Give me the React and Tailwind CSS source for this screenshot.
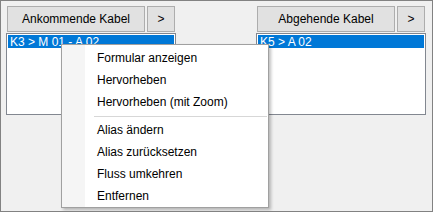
const cols = [
  { title: 'Ankommende Kabel', item: 'K3 > M 01 - A 02' },
  { title: 'Abgehende Kabel', item: 'K5 > A 02' },
];

const menu = [
  ['Formular anzeigen', 'Hervorheben', 'Hervorheben (mit Zoom)'],
  ['Alias ändern', 'Alias zurücksetzen', 'Fluss umkehren', 'Entfernen'],
];

function KabelColumn({ title, item }) {
  return (
    <div className="flex w-[170px] flex-col gap-px">
      <div className="ml-px flex gap-[2px]">
        <button className="h-[26px] w-[138px] border border-[#adadad] bg-[#e1e1e1] text-[12px] text-black">
          {title}
        </button>
        <button className="h-[26px] w-[28px] border border-[#adadad] bg-[#e1e1e1] text-[12px] text-black">
          &gt;
        </button>
      </div>
      <div className="h-[82px] border border-[#828790] bg-white p-px">
        <div className="flex h-[13px] items-center bg-[#0078d7] pl-[2px] text-[12px] leading-none text-white">
          {item}
        </div>
      </div>
    </div>
  );
}

export default function App() {
  return (
    <div
      className="relative h-[212px] w-[433px] overflow-hidden border border-[#828282] bg-[#f0f0f0]"
      style={{ fontFamily: '"Liberation Sans", Arial, sans-serif' }}
    >
      <div className="flex gap-[80px] pl-[5px] pt-[5px]">
        {cols.map((c) => (
          <KabelColumn key={c.title} {...c} />
        ))}
      </div>

      {/* context menu */}
      <div className="absolute left-[60px] top-[43px] flex h-[164px] w-[208px] border border-[#a0a0a0] bg-white pt-[2px] shadow-[2px_2px_3px_rgba(0,0,0,0.25)]">
        <div className="absolute bottom-0 left-0 top-0 w-[23px] bg-[#f5f5f5]" />
        <div className="relative flex w-full flex-col">
          {menu.map((group, gi) => (
            <div key={gi} className="flex flex-col">
              {gi > 0 && (
                <div className="flex h-[6px] items-center pl-[32px] pr-px">
                  <div className="h-px w-full bg-[#d7d7d7]" />
                </div>
              )}
              {group.map((label) => (
                <div key={label} className="flex h-[22px] items-center pl-[35px] text-[12px] text-black">
                  {label}
                </div>
              ))}
            </div>
          ))}
        </div>
      </div>
    </div>
  );
}
